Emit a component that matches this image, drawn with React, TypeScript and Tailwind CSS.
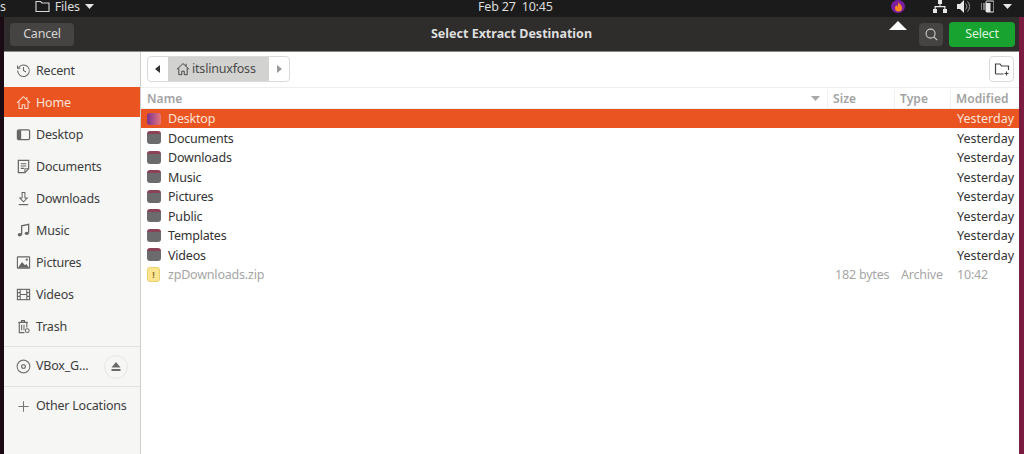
import type { ReactNode } from 'react';

const FONT = "font-['Noto_Sans','Open_Sans',sans-serif]";

function Svg({ children, size = 15, className = '' }: { children: ReactNode; size?: number; className?: string }) {
  return (
    <svg
      width={size}
      height={size}
      viewBox="0 0 16 16"
      fill="none"
      stroke="currentColor"
      strokeWidth="1.1"
      className={`shrink-0 ${className}`}
    >
      {children}
    </svg>
  );
}

const icons: Record<string, ReactNode> = {
  recent: (
    <>
      <path d="M2.600 5.200A6.200 6.200 0 1 1 1.800 8" />
      <path d="M1.600 2.600v3h3" />
      <path d="M8 4.200V8l2.600 1.600" />
    </>
  ),
  home: (
    <>
      <path d="M1 8.400 8 1.800l7 6.600" />
      <path d="M3.200 7v7.500h3.400v-4h2.800v4h3.400V7" />
      <path d="M11.500 2v3" />
    </>
  ),
  desktop: (
    <>
      <rect x="1.500" y="3" width="13" height="10.500" rx="1.500" strokeWidth="1.300" />
      <path d="M2 3.500h3.500v9.500H2z" fill="currentColor" stroke="none" />
    </>
  ),
  documents: (
    <>
      <path d="M2.500 1.500h11v9l-4 4h-7z" strokeWidth="1.300" />
      <path d="M5 5h6M5 7.500h6M5 10h3.500" />
      <path d="M9.500 14.500v-4h4" />
    </>
  ),
  downloads: (
    <>
      <path d="M6.500 1.500h3v6H12L8 11.500 4 7.500h2.500z" />
      <path d="M3 14.500h10" strokeWidth="1.300" />
    </>
  ),
  music: (
    <>
      <path d="M6 12.500V3l7.500-1.500v9" strokeWidth="1.400" />
      <ellipse cx="4" cy="12.500" rx="2.200" ry="1.800" fill="currentColor" stroke="none" />
      <ellipse cx="11.500" cy="11" rx="2.200" ry="1.800" fill="currentColor" stroke="none" />
    </>
  ),
  pictures: (
    <>
      <rect x="1.500" y="2" width="13" height="12" rx="0.500" strokeWidth="1.200" />
      <path d="M2 13.500 6.500 7.500l3 3.500 1.500-1.500 3 4z" fill="currentColor" stroke="none" />
      <circle cx="11.500" cy="5" r="1.200" fill="currentColor" stroke="none" />
    </>
  ),
  videos: (
    <>
      <rect x="1.500" y="2.500" width="13" height="11" strokeWidth="1.200" />
      <path d="M4.500 2.500v11M11.500 2.500v11M4.500 8h7M1.500 6h3M1.500 10h3M11.500 6h3M11.500 10h3" />
    </>
  ),
  trash: (
    <>
      <path d="M2.500 3.500h10M6 3.500V1.800h3v1.700" strokeWidth="1.300" />
      <path d="M3.500 3.500v11H9M11.500 3.500V9" strokeWidth="1.200" />
      <path d="M6 6v6M8.500 6v6" />
      <circle cx="12" cy="12.500" r="2" />
    </>
  ),
  disc: (
    <>
      <circle cx="8" cy="8" r="6.800" strokeWidth="1.200" />
      <circle cx="8" cy="8" r="2" strokeWidth="1.400" />
    </>
  ),
  plus: <path d="M8 2.500v11M2.500 8h11" />,
};

const places = [
  { id: 'recent', label: 'Recent' },
  { id: 'home', label: 'Home', active: true },
  { id: 'desktop', label: 'Desktop' },
  { id: 'documents', label: 'Documents' },
  { id: 'downloads', label: 'Downloads' },
  { id: 'music', label: 'Music' },
  { id: 'pictures', label: 'Pictures' },
  { id: 'videos', label: 'Videos' },
  { id: 'trash', label: 'Trash' },
];

const folders = ['Desktop', 'Documents', 'Downloads', 'Music', 'Pictures', 'Public', 'Templates', 'Videos'];

function FolderIcon({ selected }: { selected?: boolean }) {
  if (selected) {
    return <span className="mt-[4px] h-[12px] w-[14px] shrink-0 self-start rounded-[3px] bg-gradient-to-r from-[#7d2f8a] to-[#e9767a]" />;
  }
  return (
    <span className="mt-[3px] flex h-[13px] w-[14px] shrink-0 flex-col self-start overflow-hidden rounded-[3px]">
      <span className="h-[3px] bg-[#8a4256]" />
      <span className="flex-1 bg-[#6b6a6c]" />
    </span>
  );
}

function ZipIcon() {
  return (
    <span className="flex h-[15px] w-[13px] shrink-0 items-center justify-center rounded-[3px] border border-[#ecd06a] bg-[#fbe590] text-[9px] leading-none font-bold text-[#8c7a30]">
      !
    </span>
  );
}

function Sidebar() {
  return (
    <aside className="flex w-[137px] shrink-0 flex-col border-r border-[#cfcfcd] bg-[#f6f6f5] pt-[2px] text-[#3d3d3d]">
      {places.map((p) => (
        <div
          key={p.id}
          className={`my-px flex h-[30px] items-center gap-[5px] pl-[12px] ${p.active ? 'bg-[#e95420] text-[#fbe3da]' : ''}`}
        >
          <Svg className={p.active ? 'text-[#fbd9cc]' : 'text-[#666]'}>{icons[p.id]}</Svg>
          <span className="pt-[2px]">{p.label}</span>
        </div>
      ))}
      <div className="mt-[4px] border-t border-[#e2e2e0]" />
      <div className="flex h-[39px] items-center gap-[5px] pl-[12px]">
        <Svg className="text-[#777]">{icons.disc}</Svg>
        <span className="flex-1">VBox_G...</span>
        <span className="mr-[12px] flex h-6 w-6 items-center justify-center rounded-full border border-[#e6e6e4]">
          <svg width="10" height="9" viewBox="0 0 10 9" fill="#6a6a6a">
            <path d="M5 0 9.500 5.500H.5zM.5 7h9v2h-9z" />
          </svg>
        </span>
      </div>
      <div className="border-t border-[#e2e2e0]" />
      <div className="flex h-[39px] items-center gap-[5px] pl-[12px]">
        <Svg className="text-[#777]">{icons.plus}</Svg>
        <span>Other Locations</span>
      </div>
    </aside>
  );
}

function PathBar() {
  return (
    <div className="flex h-[36px] shrink-0 items-start justify-between border-b border-[#eeeeec] pt-[4px] pr-[5px] pl-[6px]">
      <div className="flex h-[26px] w-[143px] overflow-hidden rounded-[4px] border border-[#dadad8] text-[#4a4a4a]">
        <div className="flex w-[20px] items-center justify-center">
          <svg width="6" height="8" viewBox="0 0 6 8" fill="#333">
            <path d="M5 0v8L0 4z" />
          </svg>
        </div>
        <div className="flex flex-1 items-center gap-[2px] bg-[#d2d2d0] pl-[8px]">
          <Svg size={14} className="text-[#444]">{icons.home}</Svg>
          <span>itslinuxfoss</span>
        </div>
        <div className="flex w-[20px] items-center justify-center">
          <svg width="6" height="8" viewBox="0 0 6 8" fill="#999">
            <path d="M1 0v8l5-4z" />
          </svg>
        </div>
      </div>
      <div className="flex h-[26px] w-[25px] items-center justify-center rounded-[4px] border border-[#dadad8] text-[#444]">
        <Svg size={16}>
          <path d="M1.500 13V3h4.500l1.500 2h7v4" strokeWidth="1.200" />
          <path d="M1.500 13h8M12.500 10.500v4M10.500 12.500h4" strokeWidth="1.200" />
        </Svg>
      </div>
    </div>
  );
}

function Columns() {
  return (
    <div className="flex h-[21px] shrink-0 items-center border-b border-[#eeeeec] pt-[2px] text-[12px] font-semibold tracking-[0.1px] text-[#a3a3a3]">
      <div className="relative flex h-full flex-1 items-center pl-[6px]">
        Name
        <svg className="absolute top-[6px] right-[7px]" width="9" height="5" viewBox="0 0 9 5" fill="#a8a8a8">
          <path d="M0 0h9L4.500 5z" />
        </svg>
      </div>
      <div className="flex h-full w-[67px] items-center border-l border-[#f0f0ee] pl-[5px]">Size</div>
      <div className="flex h-full w-[56px] items-center border-l border-[#f0f0ee] pl-[5px]">Type</div>
      <div className="flex h-full w-[69px] items-center border-l border-[#f0f0ee] pl-[5px]">Modified</div>
    </div>
  );
}

// rows alternate 19/20px, same as the 19.5px pitch snapped to whole pixels
function Row({ name, index }: { name: string; index: number }) {
  const selected = index === 0;
  return (
    <div
      className={`flex items-center pl-[6px] ${index % 2 === 0 ? 'h-[19px]' : 'h-[20px]'} ${selected ? 'bg-[#e95420] text-[#fde0d5]' : 'text-[#333]'}`}
    >
      <FolderIcon selected={selected} />
      <span className="ml-[7px] flex-1 pt-[2px]">{name}</span>
      <span className="w-[62px] pt-[2px] tracking-normal">Yesterday</span>
    </div>
  );
}

function FileList() {
  return (
    <div className="flex-1">
      {folders.map((f, i) => (
        <Row key={f} name={f} index={i} />
      ))}
      <div className="flex h-[19px] items-center pl-[6px] text-[#a6a6a6]">
        <ZipIcon />
        <span className="ml-[8px] flex-1 pt-[2px]">zpDownloads.zip</span>
        <span className="w-[66px] pt-[2px]">182 bytes</span>
        <span className="w-[56px] pt-[2px]">Archive</span>
        <span className="w-[62px] pt-[2px]">10:42</span>
      </div>
    </div>
  );
}

function TopBar() {
  return (
    <div className="flex h-[17px] shrink-0 items-center bg-[#1b1b1b] pb-[4px] leading-[13px] text-[#dcdcdc]">
      <div className="flex w-[478px] items-center">
        <span>s</span>
        <svg width="15" height="13" viewBox="0 0 15 13" fill="none" stroke="#d8d8d8" strokeWidth="1.100" className="ml-[29px]">
          <path d="M1 11.500V1.500h4.500l1.500 1.500h7v8.500z" />
        </svg>
        <span className="ml-[5px]">Files</span>
        <svg width="9" height="5" viewBox="0 0 9 5" fill="#e5e5e5" className="ml-[5px]">
          <path d="M0 0h9L4.500 5z" />
        </svg>
      </div>
      <span className="whitespace-pre">Feb 27  10:45</span>
      <div className="mr-[12px] ml-auto flex items-center">
        <span className="mr-[28px] flex h-[13px] w-[14px] items-center justify-center rounded-full bg-[#7a1fa2]">
          <svg width="9" height="10" viewBox="0 0 9 10">
            <path d="M4.500 0c.5 2 3.500 3 3.500 6a3.500 3.500 0 0 1-7 0c0-1.500 1-2.500 1.500-3 0 1 .5 1.500 1 1.500C4 3 4 1.500 4.500 0z" fill="#ff8a1f" />
          </svg>
        </span>
        <svg width="14" height="13" viewBox="0 0 14 13" fill="#e8e8e8" className="mr-[10px]">
          <path d="M5 0h4v4H7.500v2H12.500v3H14v4h-4V9h1.300V7.200H2.700V9H4v4H0V9h1.500V6h5V4H5z" />
        </svg>
        <svg width="13" height="13" viewBox="0 0 13 13" fill="#e8e8e8" className="mr-[11px]">
          <path d="M0 4h3l4-4v13L3 9H0z" />
          <path d="M8.500 3.500a4 4 0 0 1 0 6M10.500 1.500a7 7 0 0 1 0 10" stroke="#9a9a9a" fill="none" />
        </svg>
        <svg width="13" height="13" viewBox="0 0 13 13" className="mr-[9px]">
          <path d="M0 3v7M3 3v7" stroke="#e0e0e0" strokeWidth="1" />
          <rect x="5" y="1" width="8" height="11" rx="1" fill="none" stroke="#e8e8e8" />
          <rect x="5" y="3" width="4.500" height="9" fill="#e8e8e8" />
        </svg>
        <svg width="9" height="5" viewBox="0 0 9 5" fill="#e8e8e8">
          <path d="M0 0h9L4.500 5z" />
        </svg>
      </div>
    </div>
  );
}

function HeaderBar() {
  return (
    <div className="relative flex h-[35px] shrink-0 items-center justify-between border-b border-[#8a8a88] bg-[#2e2d2c] pr-[4px] pl-[6px]">
      <button className="flex h-[23px] w-[64px] items-center justify-center rounded-[4px] bg-[#454442] text-[#d4d4d4]">
        Cancel
      </button>
      <span className="absolute left-1/2 -translate-x-1/2 text-[12.500px] font-bold tracking-normal text-[#dfdfdf]">
        Select Extract Destination
      </span>
      <div className="flex items-center gap-[6px]">
        <button className="flex h-[23px] w-[24px] items-center justify-center rounded-[4px] bg-[#454442] text-[#c8c8c8]">
          <Svg size={15}>
            <circle cx="7" cy="7" r="4.800" strokeWidth="1.200" />
            <path d="m10.500 10.500 3.500 3.500" strokeWidth="1.300" />
          </Svg>
        </button>
        <button className="flex h-[25px] w-[66px] items-center justify-center rounded-[4px] bg-[#18a330] text-[#d9f3dc]">
          Select
        </button>
      </div>
      {/* tray popover arrow sitting over the header */}
      <span className="absolute top-[4px] left-[885px] h-0 w-0 border-x-[9px] border-b-[9px] border-x-transparent border-b-white" />
    </div>
  );
}

export default function App() {
  return (
    <div className={`flex h-[454px] w-[1024px] flex-col overflow-hidden bg-[#2c0a20] text-[12.500px] tracking-[-0.2px] ${FONT}`}>
      <TopBar />
      <div className="flex min-h-0 flex-1 bg-gradient-to-r from-[#1a0a14] to-[#7b1b3f] pr-[5px] pl-[4px]">
        <div className="flex min-w-0 flex-1 flex-col">
          <HeaderBar />
          <div className="flex min-h-0 flex-1 bg-white">
            <Sidebar />
            <main className="flex min-w-0 flex-1 flex-col">
              <PathBar />
              <Columns />
              <FileList />
            </main>
          </div>
        </div>
      </div>
    </div>
  );
}
